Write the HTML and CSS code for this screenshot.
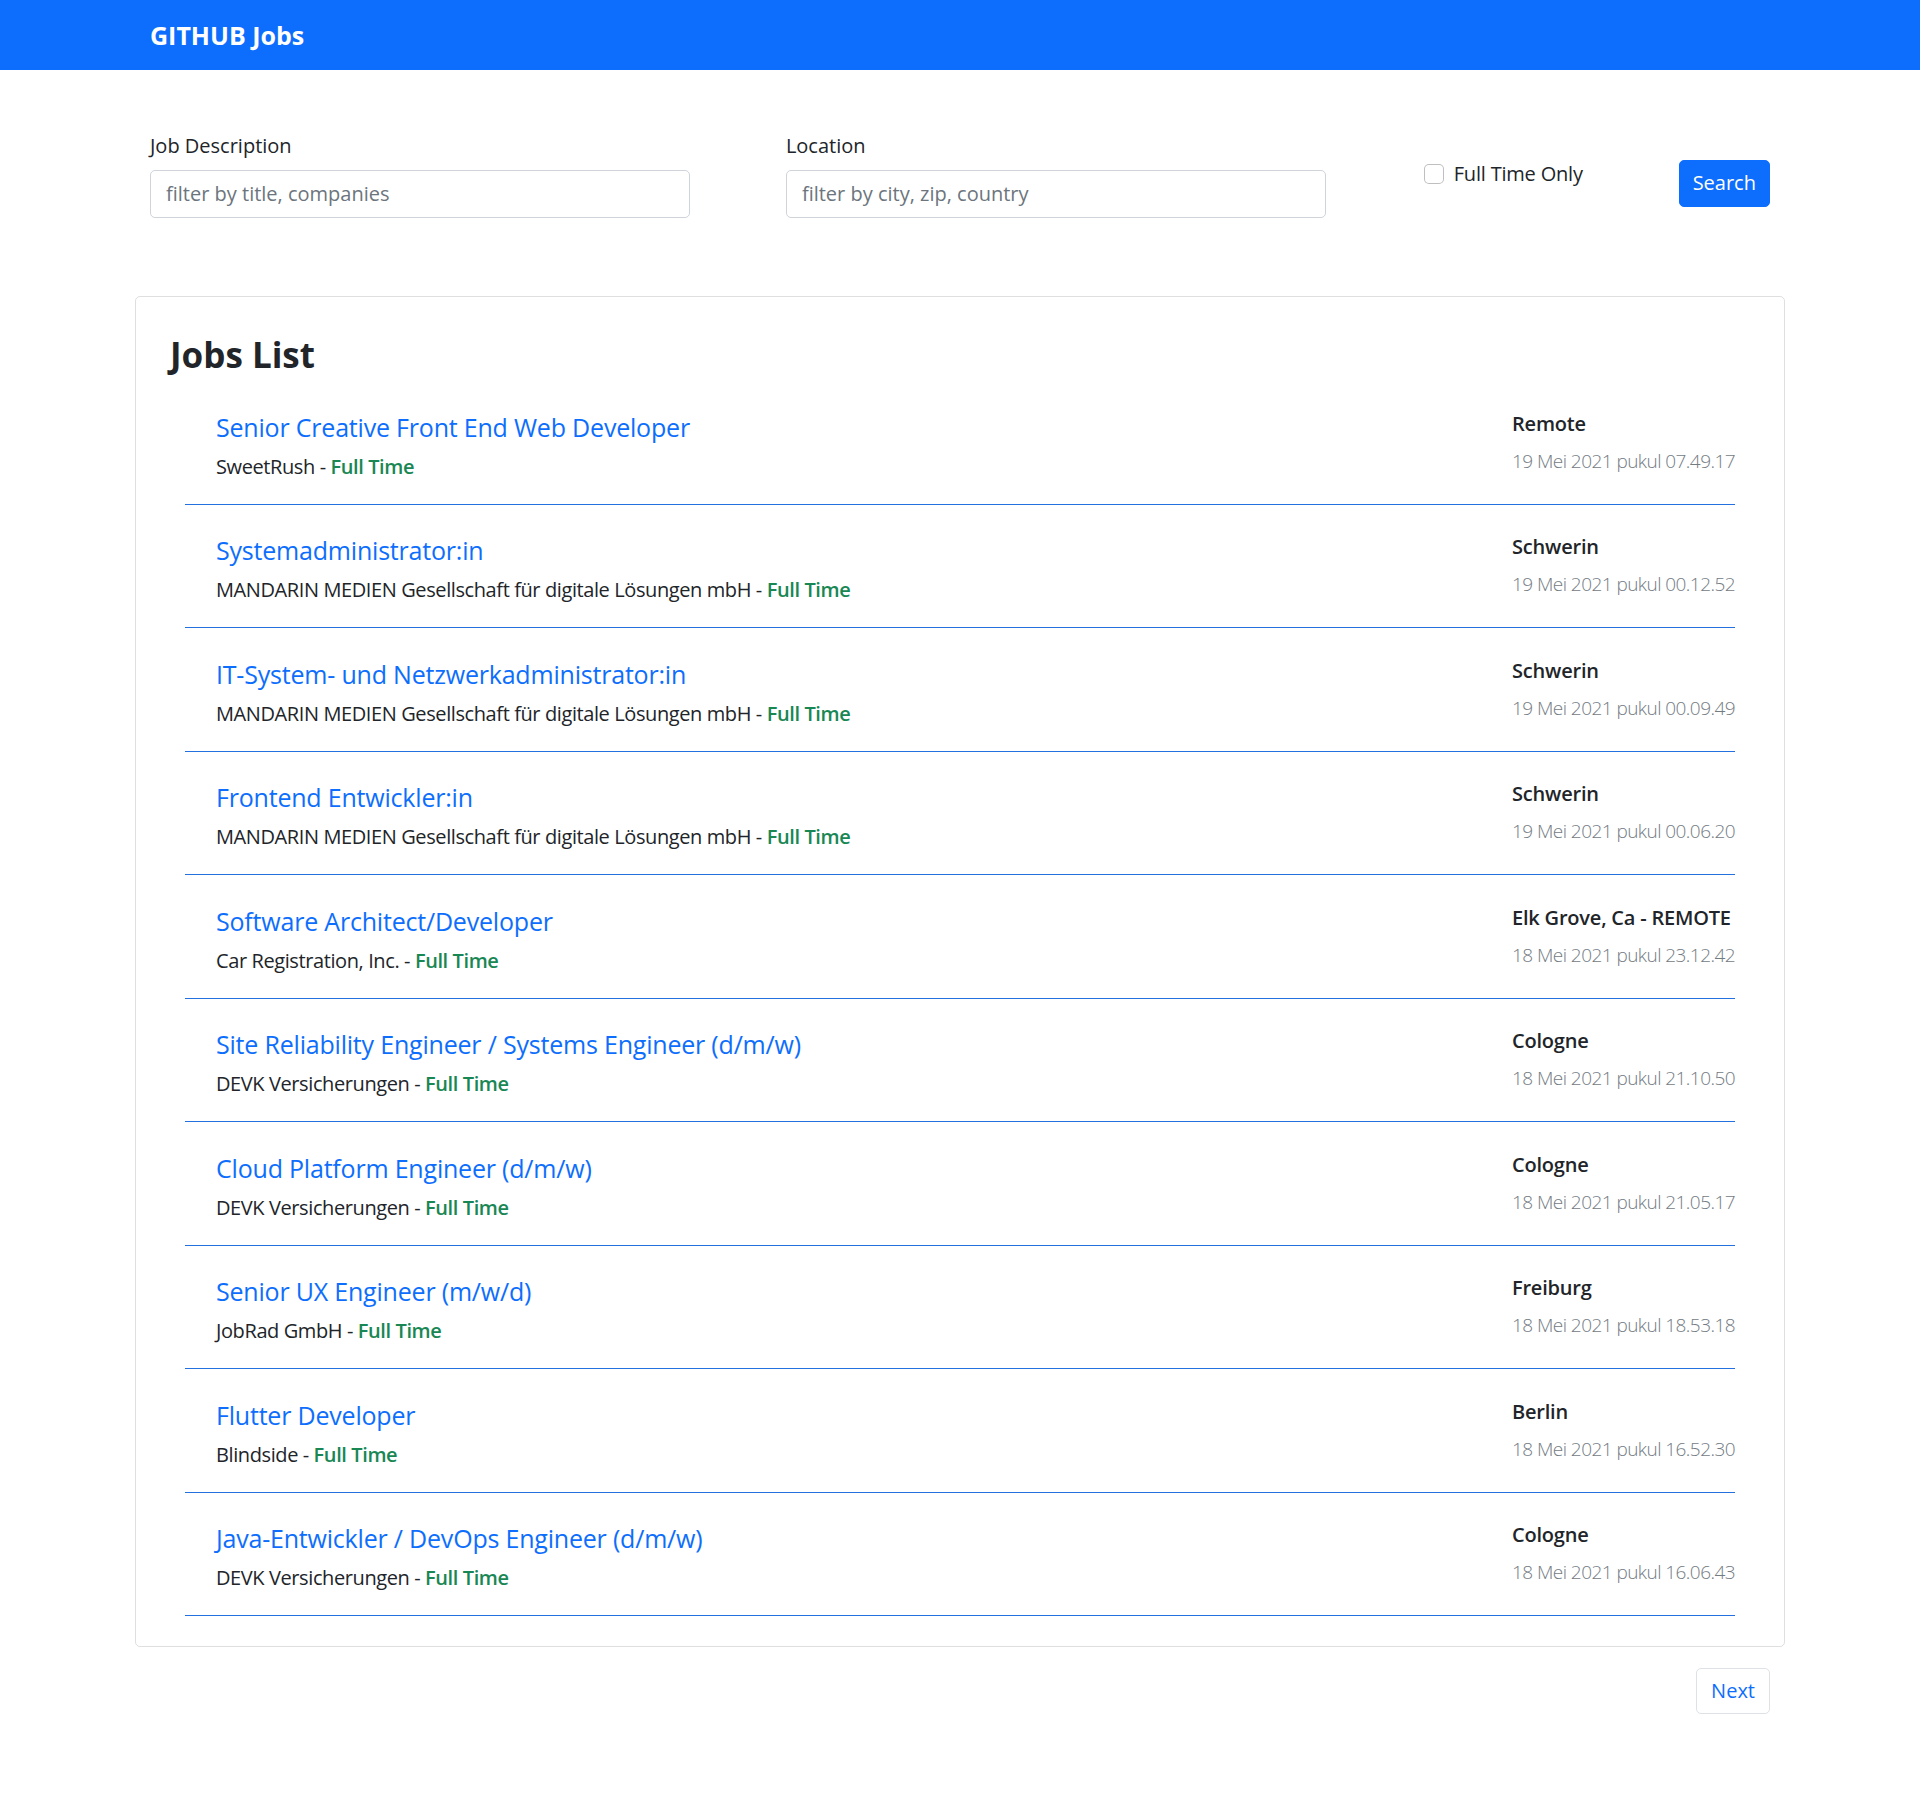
FILE: index.html
```html
<!DOCTYPE html>
<html lang="en">
<head>
<meta charset="utf-8">
<title>GITHUB Jobs</title>
<link rel="stylesheet" href="styles.css">
</head>
<body>
<nav class="navbar">
  <div class="container">
    <a class="brand" href="#">GITHUB Jobs</a>
  </div>
</nav>
<main class="container">
  <form class="search">
    <div class="field">
      <label class="field-label">Job Description</label>
      <input class="field-input" type="text" placeholder="filter by title, companies">
    </div>
    <div class="field">
      <label class="field-label">Location</label>
      <input class="field-input" type="text" placeholder="filter by city, zip, country">
    </div>
    <label class="check">
      <span class="check-box"></span>
      <span class="check-label">Full Time Only</span>
    </label>
    <button class="btn-search" type="button">Search</button>
  </form>

  <section class="card">
    <h3 class="card-title">Jobs List</h3>
    <ul class="jobs">
      <li class="job">
        <div class="job-main">
          <a class="job-title" href="#">Senior Creative Front End Web Developer</a>
          <p class="job-sub">SweetRush - <span class="job-type">Full Time</span></p>
        </div>
        <div class="job-side">
          <h6 class="job-loc">Remote</h6>
          <p class="job-date">19 Mei 2021 pukul 07.49.17</p>
        </div>
      </li>
      <li class="job">
        <div class="job-main">
          <a class="job-title" href="#">Systemadministrator:in</a>
          <p class="job-sub">MANDARIN MEDIEN Gesellschaft für digitale Lösungen mbH - <span class="job-type">Full Time</span></p>
        </div>
        <div class="job-side">
          <h6 class="job-loc">Schwerin</h6>
          <p class="job-date">19 Mei 2021 pukul 00.12.52</p>
        </div>
      </li>
      <li class="job">
        <div class="job-main">
          <a class="job-title" href="#">IT-System- und Netzwerkadministrator:in</a>
          <p class="job-sub">MANDARIN MEDIEN Gesellschaft für digitale Lösungen mbH - <span class="job-type">Full Time</span></p>
        </div>
        <div class="job-side">
          <h6 class="job-loc">Schwerin</h6>
          <p class="job-date">19 Mei 2021 pukul 00.09.49</p>
        </div>
      </li>
      <li class="job">
        <div class="job-main">
          <a class="job-title" href="#">Frontend Entwickler:in</a>
          <p class="job-sub">MANDARIN MEDIEN Gesellschaft für digitale Lösungen mbH - <span class="job-type">Full Time</span></p>
        </div>
        <div class="job-side">
          <h6 class="job-loc">Schwerin</h6>
          <p class="job-date">19 Mei 2021 pukul 00.06.20</p>
        </div>
      </li>
      <li class="job">
        <div class="job-main">
          <a class="job-title" href="#">Software Architect/Developer</a>
          <p class="job-sub">Car Registration, Inc. - <span class="job-type">Full Time</span></p>
        </div>
        <div class="job-side">
          <h6 class="job-loc">Elk Grove, Ca - REMOTE</h6>
          <p class="job-date">18 Mei 2021 pukul 23.12.42</p>
        </div>
      </li>
      <li class="job">
        <div class="job-main">
          <a class="job-title" href="#">Site Reliability Engineer / Systems Engineer (d/m/w)</a>
          <p class="job-sub">DEVK Versicherungen - <span class="job-type">Full Time</span></p>
        </div>
        <div class="job-side">
          <h6 class="job-loc">Cologne</h6>
          <p class="job-date">18 Mei 2021 pukul 21.10.50</p>
        </div>
      </li>
      <li class="job">
        <div class="job-main">
          <a class="job-title" href="#">Cloud Platform Engineer (d/m/w)</a>
          <p class="job-sub">DEVK Versicherungen - <span class="job-type">Full Time</span></p>
        </div>
        <div class="job-side">
          <h6 class="job-loc">Cologne</h6>
          <p class="job-date">18 Mei 2021 pukul 21.05.17</p>
        </div>
      </li>
      <li class="job">
        <div class="job-main">
          <a class="job-title" href="#">Senior UX Engineer (m/w/d)</a>
          <p class="job-sub">JobRad GmbH - <span class="job-type">Full Time</span></p>
        </div>
        <div class="job-side">
          <h6 class="job-loc">Freiburg</h6>
          <p class="job-date">18 Mei 2021 pukul 18.53.18</p>
        </div>
      </li>
      <li class="job">
        <div class="job-main">
          <a class="job-title" href="#">Flutter Developer</a>
          <p class="job-sub">Blindside - <span class="job-type">Full Time</span></p>
        </div>
        <div class="job-side">
          <h6 class="job-loc">Berlin</h6>
          <p class="job-date">18 Mei 2021 pukul 16.52.30</p>
        </div>
      </li>
      <li class="job">
        <div class="job-main">
          <a class="job-title" href="#">Java-Entwickler / DevOps Engineer (d/m/w)</a>
          <p class="job-sub">DEVK Versicherungen - <span class="job-type">Full Time</span></p>
        </div>
        <div class="job-side">
          <h6 class="job-loc">Cologne</h6>
          <p class="job-date">18 Mei 2021 pukul 16.06.43</p>
        </div>
      </li>
    </ul>
  </section>

  <nav class="pager">
    <a class="page-link" href="#">Next</a>
  </nav>
</main>
</body>
</html>
```
FILE: styles.css
```css
* { box-sizing: border-box; }

html, body {
  margin: 0;
  padding: 0;
}

body {
  font-family: "Open Sans", "Noto Sans", sans-serif;
  font-size: 20px;
  line-height: 1.5;
  color: #212529;
  background: #fff;
}

.container {
  width: 1650px;
  margin: 0 auto;
  padding: 0 15px;
}

/* navbar */
.navbar {
  background: #0d6efd;
  height: 70px;
  display: flex;
  align-items: center;
}
.navbar .container {
  display: flex;
  align-items: center;
}
.brand {
  color: #fff;
  font-size: 25px;
  font-weight: 700;
  line-height: 30px;
  text-decoration: none;
}

/* search form */
.search {
  display: flex;
  justify-content: space-between;
  align-items: center;
  margin-top: 61px;
}
.field {
  width: 540px;
  display: flex;
  flex-direction: column;
}
.field-label {
  line-height: 30px;
  margin-bottom: 9px;
  font-weight: 500;
}
.field-input {
  height: 47.5px;
  padding: 7.5px 15px;
  font: inherit;
  font-size: 20px;
  color: #212529;
  border: 1px solid #ced4da;
  border-radius: 5px;
  outline: none;
}
.field-input::placeholder {
  color: #6c757d;
}
.check {
  display: flex;
  align-items: center;
  gap: 10px;
  width: 161px;
}
.check-box {
  width: 20px;
  height: 20px;
  margin-left: 2px;
  border: 1px solid rgba(0, 0, 0, 0.25);
  border-radius: 5px;
  background: #fff;
  flex: none;
}
.check-label {
  font-weight: 500;
  line-height: 30px;
  white-space: nowrap;
  letter-spacing: -0.2px;
}
.btn-search {
  margin-top: 18px;
  height: 47.5px;
  padding: 7.5px 13px;
  font: inherit;
  font-size: 20px;
  color: #fff;
  background: #0d6efd;
  border: 1px solid #0d6efd;
  border-radius: 5px;
}

/* card */
.card {
  margin: 78px -15px 0;
  border: 1px solid rgba(0, 0, 0, 0.125);
  border-radius: 5px;
  padding: 37.5px 34px 30px;
}
.card-title {
  margin: 0 0 5px;
  font-size: 35px;
  font-weight: 700;
  line-height: 42px;
}

.jobs {
  list-style: none;
  margin: 0 15px;
  padding: 0;
}
.job {
  display: flex;
  justify-content: space-between;
  align-items: flex-start;
  padding: 30.5px 0 22px 31px;
  border-bottom: 1px solid #2470de;
}
.job-main {
  display: flex;
  flex-direction: column;
  align-items: flex-start;
}
.job-title {
  color: #0d6efd;
  font-size: 25px;
  line-height: 30px;
  letter-spacing: -0.2px;
  text-decoration: none;
  margin-bottom: 10px;
}
.job-sub {
  margin: 0;
  line-height: 30px;
  letter-spacing: -0.4px;
}
.job-type {
  color: #198754;
  font-weight: 600;
}
.job-side {
  margin-top: 0;
}
.job-loc {
  margin: 0 0 10px;
  font-size: 20px;
  font-weight: 600;
  line-height: 24px;
  letter-spacing: -0.2px;
}
.job-date {
  margin: 0;
  color: #737b83;
  font-size: 19px;
  font-weight: 300;
  line-height: 30px;
  letter-spacing: -0.55px;
}

/* pager */
.pager {
  display: flex;
  justify-content: flex-end;
  margin-top: 21px;
  padding-bottom: 80px;
}
.page-link {
  display: block;
  padding: 7px 14px;
  line-height: 30px;
  color: #0d6efd;
  text-decoration: none;
  border: 1px solid #dee2e6;
  border-radius: 5px;
}
```
